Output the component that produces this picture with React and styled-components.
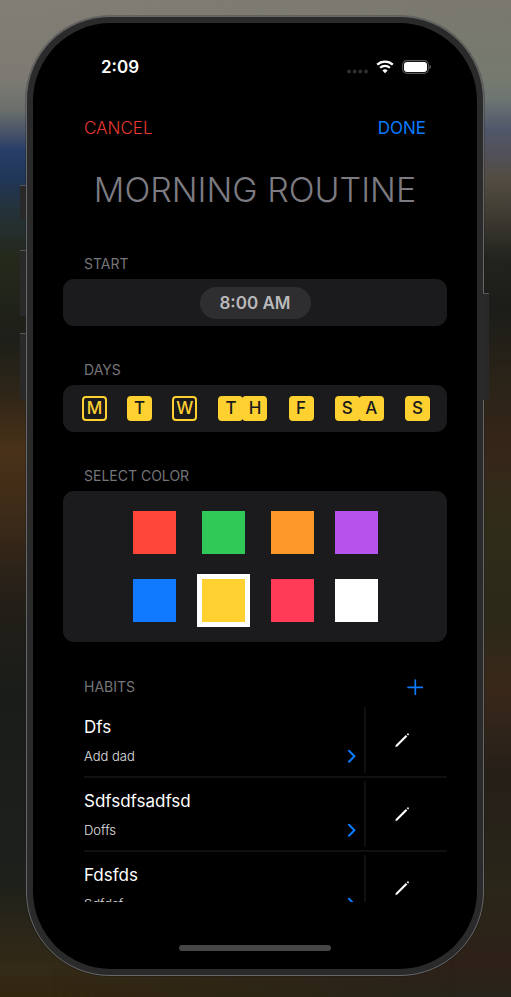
import React, { useState } from "react";
import styled, { createGlobalStyle } from "styled-components";

const c = {
  blue: "#0a7aff",
  yellow: "#ffd130",
  card: "#1b1b1d",
  label: "#757579",
  rule: "#101011",
};

const GlobalStyle = createGlobalStyle`
  * { box-sizing: border-box; }
  body {
    margin: 0;
    background: #1e1f1a;
    color: #fff;
    font-family: Inter, "Liberation Sans", sans-serif;
  }
  button { font: inherit; color: inherit; background: none; border: 0; padding: 0; cursor: pointer; }
`;

const Page = styled.div`
  position: relative;
  display: flex;
  height: 100vh;
  padding: 16px 27px 21px 26px;
  background: linear-gradient(
    #827e76 0, #7c7a72 8%, #6b6f6c 11%, #4c5769 13%, #293e68 15%, #203656 18%,
    #24323a 21%, #25291b 26%, #1d1f19 34%, #2d2518 39%, #483118 45%, #3f2c18 51%,
    #241f18 60%, #191c19 70%, #1d201b 88%, #332a17 97%, #33260f 100%
  );

  &::before {
    content: "";
    position: absolute;
    inset: 0;
    background: linear-gradient(
      #7b786f 0, #757a6f 8%, #6d7472 10%, #50576a 13%, #524f55 16%, #524c40 18%,
      #423e35 21%, #22231e 26%, #1c1d19 31%, #2a2318 38%, #362619 45%, #302c1a 53%,
      #2c2919 62%, #39281a 69%, #251f18 78%, #2a2619 89%, #2e2018 97%, #26241a 100%
    );
    mask-image: linear-gradient(to right, transparent 10%, #000 90%);
  }
`;

const Phone = styled.div`
  position: relative;
  display: flex;
  flex: 1;
  border: 1px solid #66676a;
  border-radius: 84px;
  padding: 6px;
  background: #2a2a2b;
  box-shadow: 0 0 0 1px rgba(20, 20, 20, 0.25);
`;

const SideButton = styled.span`
  position: absolute;
  top: ${(p) => p.$top};
  ${(p) => (p.$side === "left" ? "left: -7px;" : "right: -6px;")}
  width: 6px;
  height: ${(p) => p.$height};
  border-top: 1px solid #55565a;
  border-radius: 1px;
  background: #29292a;
`;

const Screen = styled.div`
  display: flex;
  flex: 1;
  flex-direction: column;
  min-width: 0;
  border-radius: 78px;
  padding: 0 30px;
  background: #000;
  overflow: hidden;
`;

const StatusBar = styled.div`
  display: flex;
  align-items: center;
  justify-content: space-between;
  flex: none;
  height: 88px;
  padding: 0 15px 0 38px;
`;

const Clock = styled.time`
  font-size: 17px;
  font-weight: 600;
`;

const StatusIcons = styled.div`
  display: flex;
  align-items: center;
  gap: 8px;
`;

const NavBar = styled.nav`
  display: flex;
  align-items: center;
  justify-content: space-between;
  flex: none;
  height: 34px;
  padding: 0 21px;
`;

const NavButton = styled.button`
  && { color: ${(p) => p.$color}; }
  font-size: 17px;
  font-weight: ${(p) => p.$weight};
  line-height: 24px;
`;

const Scroll = styled.main`
  flex: 1;
  min-height: 0;
  overflow-y: auto;
  scrollbar-width: none;
`;

const Title = styled.h1`
  margin: 23px 0 43px;
  color: #7c7b82;
  font-size: 34px;
  font-weight: 300;
  line-height: 44px;
  text-align: center;
  white-space: nowrap;
`;

const Section = styled.section`
  margin-bottom: ${(p) => p.$gap || "35px"};
`;

const SectionLabel = styled.h2`
  margin: 0;
  color: ${c.label};
  font-size: 14px;
  font-weight: 400;
  line-height: 18px;
`;

const SectionHeader = styled.header`
  display: flex;
  align-items: center;
  justify-content: space-between;
  padding: 0 24px 0 21px;
  margin-bottom: ${(p) => p.$gap || "6px"};
`;

const Card = styled.div`
  display: flex;
  align-items: center;
  justify-content: ${(p) => p.$justify || "center"};
  min-height: 47px;
  padding: ${(p) => p.$pad || "0"};
  border-radius: 11px;
  background: ${c.card};
`;

const TimeButton = styled.button`
  && { color: #b9b9bb; background: #2e2e30; }
  height: 32px;
  width: 111px;
  border-radius: 16px;
  font-size: 17px;
  font-weight: 600;
`;

const DayButton = styled.button`
  display: flex;
  && { padding: ${(p) => (p.$wide ? "0 1px" : "0")}; }
`;

const DayTile = styled.span`
  width: 25px;
  height: 25px;
  border: 2px solid ${c.yellow};
  border-radius: 4px;
  background: ${(p) => (p.$on ? c.yellow : "transparent")};
  color: ${(p) => (p.$on ? c.card : c.yellow)};
  font-size: 17px;
  font-weight: 500;
  line-height: 21px;
  display: grid;
  place-items: center;

  & + & { margin-left: -1px; }
`;

const SwatchGrid = styled.div`
  display: grid;
  grid-template-columns: repeat(4, auto);
  gap: 20px 21px;
  place-items: center;
`;

const Swatch = styled.input`
  appearance: none;
  width: 43px;
  height: 43px;
  margin: 0;
  background: ${(p) => p.$color};
  cursor: pointer;

  &:checked {
    width: 53px;
    height: 53px;
    border: 5px solid #fff;
  }
`;

const HabitList = styled.ul`
  margin: 0;
  padding: 0 0 0 21px;
  list-style: none;
`;

const HabitRow = styled.li`
  display: flex;
  height: 74px;
  padding: 3px 0;
  border-bottom: 2px solid ${c.rule};
`;

const HabitButton = styled.button`
  flex: 1;
  display: grid;
  grid-template-columns: 1fr auto;
  grid-template-rows: 22px 18px;
  gap: 9px 0;
  align-content: start;
  align-items: center;
  min-width: 0;
  && {
    padding: 9px 8px 0 0;
    border-right: 2px solid ${c.rule};
  }
  text-align: left;
`;

const HabitName = styled.span`
  grid-column: 1 / -1;
  font-size: 17px;
  font-weight: 400;
  line-height: 22px;
`;

const HabitNote = styled.span`
  color: #e0e0e2;
  font-size: 13px;
  font-weight: 300;
  line-height: 18px;
`;

const EditButton = styled.button`
  display: grid;
  place-items: center;
  width: 81px;
  && { padding-right: 9px; }
`;

const PlusButton = styled.button`
  display: grid;
  place-items: center;
  height: 24px;
`;

const HomeArea = styled.div`
  display: flex;
  align-items: flex-start;
  justify-content: center;
  flex: none;
  height: 67px;
  padding-top: 43px;
`;

const HomeBar = styled.div`
  width: 152px;
  height: 6px;
  border-radius: 3px;
  background: #464646;
`;

const SignalIcon = () => (
  <svg width="21" height="14" viewBox="0 0 21 14" fill="#303032" aria-hidden="true">
    {[2, 7.7, 13.3, 19].map((x) => <circle key={x} cx={x} cy="11.5" r="1.9" />)}
  </svg>
);

const WifiIcon = () => (
  <svg width="18" height="14" viewBox="0 0 18 14" fill="none" stroke="#fff" aria-hidden="true">
    <path d="M1.2 4.7a11.2 11.2 0 0 1 15.6 0" strokeWidth="2.3" />
    <path d="M4.1 7.8a7.1 7.1 0 0 1 9.8 0" strokeWidth="2.2" />
    <path d="M9 13.2 6.4 10.5a3.8 3.8 0 0 1 5.2 0z" fill="#fff" stroke="none" />
  </svg>
);

const BatteryIcon = () => (
  <svg width="30" height="14" viewBox="0 0 30 14" aria-hidden="true">
    <rect x="0.6" y="0.6" width="25.8" height="12.8" rx="4.4" fill="none" stroke="#58585a" strokeWidth="1.1" />
    <rect x="2" y="2" width="23" height="10" rx="3" fill="#fff" />
    <path d="M27.5 4.8c1.9.8 1.9 3.6 0 4.4z" fill="#6a6a6c" />
  </svg>
);

const PlusIcon = () => (
  <svg width="16" height="16" viewBox="0 0 16 16" stroke={c.blue} strokeWidth="1.7" strokeLinecap="round" aria-hidden="true">
    <path d="M8.3 1v14.6M1 8.3h14.6" />
  </svg>
);

const ChevronIcon = () => (
  <svg width="9" height="14" viewBox="0 0 9 14" fill="none" stroke={c.blue} strokeWidth="2" strokeLinecap="round" strokeLinejoin="round" aria-hidden="true">
    <path d="M2 1.8 7.4 7.3 2 12.8" />
  </svg>
);

const PencilIcon = () => (
  <svg width="16" height="16" viewBox="0 0 16 16" aria-hidden="true">
    <path d="M1.3 15l.5-2L11.8 3l1.5 1.5-10 10z" fill="#fff" />
    <path d="M12.7 2.3l.8-.8c.7-.6 1.9.6 1.3 1.3l-.8.8z" fill="#fff" />
  </svg>
);

const initialDays = [
  { id: "Monday", tiles: "M", on: false },
  { id: "Tuesday", tiles: "T", on: true },
  { id: "Wednesday", tiles: "W", on: false },
  { id: "Thursday", tiles: "TH", on: true },
  { id: "Friday", tiles: "F", on: true },
  { id: "Saturday", tiles: "SA", on: true },
  { id: "Sunday", tiles: "S", on: true },
];

const colors = [
  ["Red", "#ff453a"],
  ["Green", "#30c957"],
  ["Orange", "#ff982b"],
  ["Purple", "#b553ec"],
  ["Blue", "#0f7aff"],
  ["Yellow", "#ffd130"],
  ["Pink", "#ff3b58"],
  ["White", "#ffffff"],
];

const habits = [
  { name: "Dfs", note: "Add dad" },
  { name: "Sdfsdfsadfsd", note: "Doffs" },
  { name: "Fdsfds", note: "Sdfdsf" },
];

export default function App() {
  const [days, setDays] = useState(initialDays);
  const [color, setColor] = useState("Yellow");
  const toggle = (id) => setDays(days.map((d) => (d.id === id ? { ...d, on: !d.on } : d)));

  return (
    <Page>
      <GlobalStyle />
      <Phone>
        <SideButton $side="left" $top="168px" $height="35px" />
        <SideButton $side="left" $top="233px" $height="66px" />
        <SideButton $side="left" $top="316px" $height="67px" />
        <SideButton $side="right" $top="276px" $height="107px" />
        <Screen>
          <StatusBar>
            <Clock>2:09</Clock>
            <StatusIcons>
              <SignalIcon />
              <WifiIcon />
              <BatteryIcon />
            </StatusIcons>
          </StatusBar>
          <NavBar>
            <NavButton type="button" $color="#e8382f" $weight={300}>CANCEL</NavButton>
            <NavButton type="button" $color={c.blue} $weight={400}>DONE</NavButton>
          </NavBar>
          <Scroll>
            <Title>MORNING ROUTINE</Title>
            <Section>
              <SectionHeader><SectionLabel>START</SectionLabel></SectionHeader>
              <Card><TimeButton type="button">8:00 AM</TimeButton></Card>
            </Section>
            <Section>
              <SectionHeader><SectionLabel>DAYS</SectionLabel></SectionHeader>
              <Card $justify="space-between" $pad="0 17px 0 19px">
                {days.map((d) => (
                  <DayButton
                    key={d.id}
                    type="button"
                    $wide={d.tiles.length > 1}
                    aria-label={d.id}
                    aria-pressed={d.on}
                    onClick={() => toggle(d.id)}
                  >
                    {[...d.tiles].map((t) => <DayTile key={t} $on={d.on}>{t}</DayTile>)}
                  </DayButton>
                ))}
              </Card>
            </Section>
            <Section $gap="33px">
              <SectionHeader><SectionLabel>SELECT COLOR</SectionLabel></SectionHeader>
              <Card $pad="20px 0 15px">
                <SwatchGrid role="radiogroup" aria-label="Select color">
                  {colors.map(([name, value]) => (
                    <Swatch
                      key={name}
                      type="radio"
                      name="color"
                      aria-label={name}
                      $color={value}
                      checked={color === name}
                      onChange={() => setColor(name)}
                    />
                  ))}
                </SwatchGrid>
              </Card>
            </Section>
            <Section $gap="0">
              <SectionHeader $gap="5px">
                <SectionLabel>HABITS</SectionLabel>
                <PlusButton type="button" aria-label="Add habit"><PlusIcon /></PlusButton>
              </SectionHeader>
              <HabitList>
                {habits.map((h) => (
                  <HabitRow key={h.name}>
                    <HabitButton type="button">
                      <HabitName>{h.name}</HabitName>
                      <HabitNote>{h.note}</HabitNote>
                      <ChevronIcon />
                    </HabitButton>
                    <EditButton type="button" aria-label={`Edit ${h.name}`}><PencilIcon /></EditButton>
                  </HabitRow>
                ))}
              </HabitList>
            </Section>
          </Scroll>
          <HomeArea><HomeBar /></HomeArea>
        </Screen>
      </Phone>
    </Page>
  );
}
